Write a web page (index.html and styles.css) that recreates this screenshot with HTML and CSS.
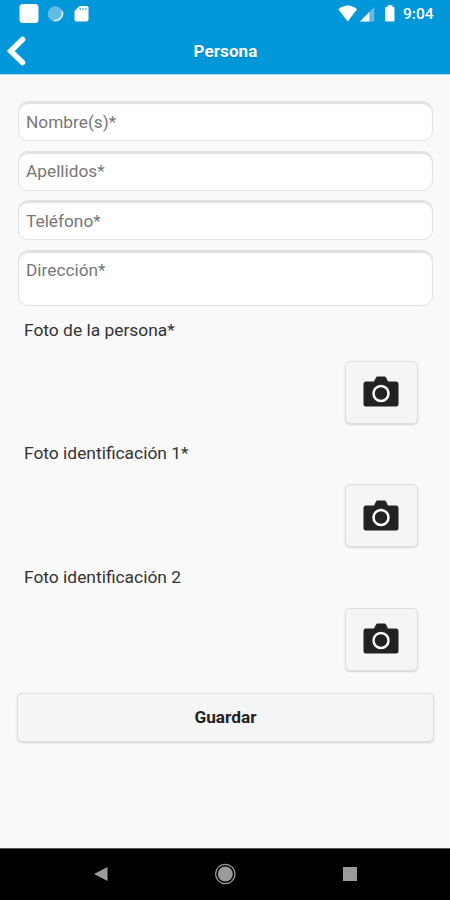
FILE: index.html
```html
<!DOCTYPE html>
<html lang="es">
<head>
  <meta charset="utf-8">
  <title>Persona</title>
<link rel="stylesheet" href="styles.css">
</head>
<body>
  <div class="header">
    <div class="status_bar">
      <svg class="status_left" width="100" height="28" viewBox="0 0 100 28">
        <rect x="19.5" y="4" width="19" height="19" rx="3.5" fill="#fff"/>
        <circle cx="55.3" cy="13.8" r="7.6" fill="#62bbe4"/>
        <path d="M62 11a7 7 0 0 1-8 9.3" fill="none" stroke="#d2edf9" stroke-width="1.7"/>
        <path d="M79.5 6H87q1.5 0 1.5 1.5v12q0 2-2 2h-10q-2 0-2-2V11z" fill="#fff"/>
        <path d="M80.2 7.7v2.5M83 7.7v2.5M85.8 7.7v2.5" stroke="#4eb1df" stroke-width="1.3"/>
      </svg>
      <svg class="status_right" width="64" height="28" viewBox="0 0 64 28">
        <path d="M.3 9.300Q9.700 1.800 19.100 9.300L9.700 21.500z" fill="#fff"/>
        <path d="M22 21.500L36.300 7v14.500z" fill="#63bbe5"/>
        <path d="M22 21.500L31.300 12v9.500z" fill="#fff"/>
        <path d="M48 7h1.500V5.300h5V7h.8q1.200 0 1.200 1.200V20q0 1.500-1.500 1.500h-6.400q-1.500 0-1.500-1.500V8.200Q47.100 7 48 7z" fill="#fff"/>
      </svg>
      <span class="clock">9:04</span>
    </div>
    <div class="title_bar">
      <svg class="back" width="28" height="30" viewBox="0 0 28 30">
        <path d="M22.500 3.500L10.800 15l11.700 11.500" fill="none" stroke="#fff" stroke-width="5.500" stroke-linecap="round"/>
      </svg>
      <h1>Persona</h1>
    </div>
  </div>
  <form class="main">
    <input class="field" type="text" placeholder="Nombre(s)*">
    <input class="field" type="text" placeholder="Apellidos*">
    <input class="field" type="text" placeholder="Teléfono*">
    <textarea class="field area" placeholder="Dirección*"></textarea>
    <div class="photo">
      <label>Foto de la persona*</label>
      <button type="button" class="btn_photo">
        <svg width="36" height="32" viewBox="0 0 36 32">
          <path d="M3 5.500h8l2-4q.5-1 1.500-1h7q1 0 1.500 1l2 4h8q2.500 0 2.500 2.500v20q0 2.500-2.500 2.500H3Q.5 30.500.5 28V8Q.5 5.500 3 5.500z" fill="#222"/>
          <circle cx="18" cy="17.500" r="7.500" fill="#222" stroke="#fff" stroke-width="2.500"/>
        </svg>
      </button>
    </div>
    <div class="photo">
      <label>Foto identificación 1*</label>
      <button type="button" class="btn_photo">
        <svg width="36" height="32" viewBox="0 0 36 32">
          <path d="M3 5.500h8l2-4q.5-1 1.500-1h7q1 0 1.500 1l2 4h8q2.500 0 2.500 2.500v20q0 2.500-2.500 2.500H3Q.5 30.500.5 28V8Q.5 5.500 3 5.500z" fill="#222"/>
          <circle cx="18" cy="17.500" r="7.500" fill="#222" stroke="#fff" stroke-width="2.500"/>
        </svg>
      </button>
    </div>
    <div class="photo">
      <label>Foto identificación 2</label>
      <button type="button" class="btn_photo">
        <svg width="36" height="32" viewBox="0 0 36 32">
          <path d="M3 5.500h8l2-4q.5-1 1.500-1h7q1 0 1.500 1l2 4h8q2.500 0 2.500 2.500v20q0 2.500-2.500 2.500H3Q.5 30.500.5 28V8Q.5 5.500 3 5.500z" fill="#222"/>
          <circle cx="18" cy="17.500" r="7.500" fill="#222" stroke="#fff" stroke-width="2.500"/>
        </svg>
      </button>
    </div>
    <button type="button" class="btn_save">Guardar</button>
  </form>
  <div class="nav_bar">
    <svg width="450" height="50" viewBox="0 0 450 50">
      <path d="M94 25l13.500-7v14z" fill="#9b9b9b"/>
      <circle cx="225.300" cy="25" r="7.500" fill="#9b9b9b"/>
      <circle cx="225.300" cy="25" r="9.700" fill="none" stroke="#9b9b9b" stroke-width="1.300"/>
      <rect x="343" y="18" width="14" height="14" fill="#9b9b9b"/>
    </svg>
  </div>
</body>
</html>
```

FILE: styles.css
```css
* {
  box-sizing: border-box;
}
body {
  margin: 0;
  height: 900px;
  display: flex;
  flex-direction: column;
  overflow: hidden;
  font-family: Roboto, "Liberation Sans", sans-serif;
  background-color: #f9f9f9;
}
svg {
  display: block;
}
.header {
  height: 75px;
  background-color: #0297d9;
  border-bottom: 1px solid #a5d8ee;
  color: #fff;
}
.status_bar {
  display: flex;
  height: 28px;
}
.status_right {
  margin-left: auto;
}
.clock {
  width: 48px;
  padding-left: 1px;
  font-size: 15.500px;
  font-weight: 500;
  line-height: 29px;
}
.title_bar {
  display: grid;
  grid-template-columns: 28px 1fr 28px;
  align-items: center;
  height: 45px;
}
h1 {
  margin: 0;
  padding-left: 1px;
  font-size: 17px;
  line-height: 20px;
  text-align: center;
  letter-spacing: 0.1px;
  text-shadow: 0 1px 1px rgba(0, 0, 0, 0.2);
}
.main {
  flex: 1;
  padding: 26px 16px 0 18px;
}
.field {
  display: block;
  width: 415px;
  height: 40px;
  margin: 0 0 9.500px;
  padding: 1px 7px 0;
  border: 1px solid #e2e2e2;
  border-radius: 10px;
  background-color: #fff;
  box-shadow: inset 0 2px 1px #e0e0e0;
  font-family: inherit;
  font-size: 17.300px;
}
.field::placeholder {
  color: #777;
}
.area {
  height: 56px;
  margin-bottom: 0;
  padding-top: 9px;
  resize: none;
}
.photo {
  display: flex;
  flex-direction: column;
  height: 123.700px;
  padding: 13px 16px 0 6px;
}
.photo label {
  font-size: 17.400px;
  line-height: 22px;
  color: #333;
}
.btn_photo {
  display: flex;
  align-items: center;
  justify-content: center;
  align-self: flex-end;
  width: 73px;
  height: 63px;
  margin-top: 20px;
  padding: 0 2px 0 0;
}
.btn_photo, .btn_save {
  border: 1px solid #dedede;
  border-radius: 5px;
  background-color: #f5f5f5;
  box-shadow: 0 1px 2px rgba(0, 0, 0, 0.15);
}
.btn_save {
  width: 417px;
  height: 49px;
  margin-top: 16px;
  margin-left: -1px;
  font-family: inherit;
  font-size: 17.300px;
  font-weight: bold;
  color: #222;
}
.nav_bar {
  height: 52px;
  border-top: 1px solid #555;
  background-color: #000;
}
```
